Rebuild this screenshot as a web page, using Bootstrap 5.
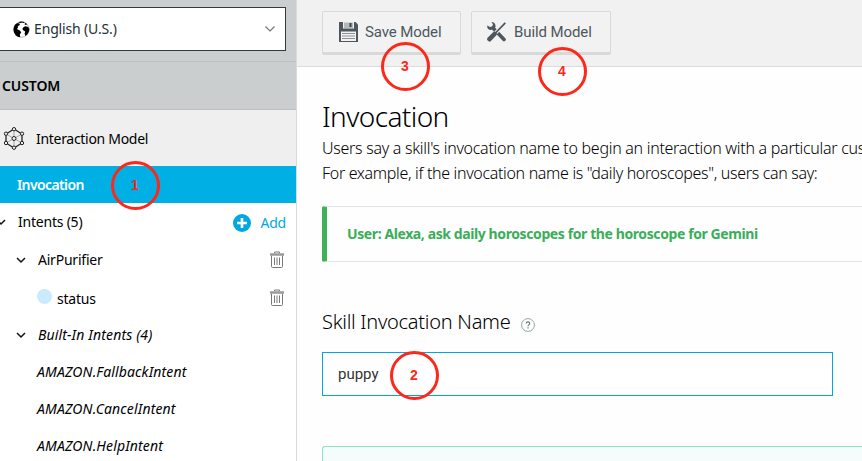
<!DOCTYPE html>
<html lang="en">
<head>
<meta charset="utf-8">
<meta name="viewport" content="width=device-width, initial-scale=1">
<title>Invocation</title>
<link href="https://cdn.jsdelivr.net/npm/bootstrap@5.3.0/dist/css/bootstrap.min.css" rel="stylesheet">
<style>
body { font-family: "Noto Sans", "Open Sans", sans-serif; font-size: 14px; line-height: 20px; color: #000; background: #fefefe; }
svg { flex: none; display: block; }
.shell { height: 461px; }
.side { width: 297px; border-right: 1px solid #d9dada; }
.side-head { background: #cacece; height: 110px; padding-top: 7px; }
.locale { width: 286px; height: 44px; border: 1px solid #333b3e; border-left: 0; background: #fff; color: #232f34; padding: 0 9px 0 13px; }
.section-name { margin-top: 10px; height: 49px; border-top: 1px solid #bcc1c1; border-bottom: 1px solid #bcc1c1; padding-left: 2px; font-weight: 600; }
.model-row { height: 56px; background: #efefef; padding: 1px 0 0 3px; gap: 11px; }
.active-row { height: 37px; background: #00b0e4; color: #fff; font-weight: 600; padding-left: 17px; }
.tree-row { height: 37px; padding-right: 11px; }
.tree-row.tall { height: 38px; }
.dot { width: 15px; height: 15px; background: #c9eaff; margin: -3px 5px 0 37px; }
.builtin { padding-left: 37px; font-style: italic; }
.add-link { color: #00a8e1; gap: 9px; margin-right: -1px; padding-top: 1px; }
.toolbar { height: 67px; background: #f1f1f1; border-bottom: 1px solid #dcdcdc; padding: 11px 0 0 25px; gap: 10px; }
.tool-btn { --bs-btn-border-radius: 2px; width: 139px; height: 44px; border: 1px solid #d9d9d9; border-bottom-width: 3px; background: #f2f2f2; color: #4d575d; font: 15px/20px Roboto, sans-serif; padding: 0 0 0 16px; gap: 7px; letter-spacing: -.1px; }
.tool-btn.wide { width: 140px; padding-left: 15px; gap: 8px; }
.pane { padding: 34px 0 0 25px; }
.page-title { font-size: 28px; line-height: 30px; font-weight: 300; margin: 0; letter-spacing: -.6px; }
.intro { font-size: 16px; line-height: 25px; font-weight: 300; margin: 5px 0 20px; }
.sample { height: 56px; border: 1px solid #e3e5e5; border-left: 5px solid #3fb159; border-right: 0; border-radius: 2px 0 0 2px; padding-left: 20px; color: #3aae58; font-weight: 700; letter-spacing: -.4px; }
.field-head { margin-top: 47px; gap: 11px; }
.field-head svg { margin-top: 5px; }
.field-title { font-size: 20px; line-height: 26px; font-weight: 300; margin: 0; letter-spacing: -.27px; }
.name-input, .name-input:focus { width: 511px; height: 44px; margin-top: 17px; border: 1px solid #00a8e1; border-radius: 0; padding: 0 15px; font: 15px/20px Roboto, sans-serif; color: #333; background: #fff; }
.hint { height: 60px; margin-top: 50px; border: 1px solid #8fe3c5; border-right: 0; border-radius: 3px 0 0 0; background: #f5fdfc; }
.step { position: absolute; width: 49px; height: 49px; border: 3px solid #fb281c; border-radius: 50%; color: #fb281c; font: bold 14px/43px "Liberation Sans", Arial, sans-serif; text-align: center; padding-right: 1px; }
.step-1 { left: 111px; top: 161px; }
.step-2 { left: 390px; top: 351px; }
.step-3 { left: 381px; top: 42px; }
.step-4 { left: 538px; top: 47px; }
.t-locale { letter-spacing: -.15px; }
.t-custom { letter-spacing: -.1px; }
.t-model { letter-spacing: -.3px; }
.t-active { letter-spacing: -.6px; }
.t-tree { letter-spacing: -.22px; }
.t-italic { letter-spacing: .14px; }
.t-slot { padding-top: 2px; }
.line-one { letter-spacing: -.28px; }
.line-two { letter-spacing: -.33px; }
</style>
</head>
<body class="overflow-hidden">
<div class="shell d-flex overflow-hidden position-relative">
  <aside class="side flex-shrink-0 bg-white overflow-hidden">
    <div class="side-head">
      <div class="locale d-flex align-items-center">
        <svg width="17" height="17" viewBox="0 0 17 17"><circle cx="8.5" cy="8.5" r="7.7" fill="#fff" stroke="#777" stroke-width=".5"/><path d="M2.200 3.500 4.500 2 7 2.800 6.500 4.200 4.800 5.200 5 6.800 3.900 8 6.800 9.500 8.200 11.300 6.800 13.500 7.200 16.200C3 15.800.6 12.500.5 8.500.6 6.500 1.200 4.800 2.200 3.500zM5 1.300C7.200.2 9.700.2 12 1.300L10.300 2 9.200 1.500 7.500 2zM12.200 1.700 14.200 3.200 12.700 4 11.600 3.200zM10.200 6.500 12 5.200 14.800 5.800 16.300 7.500C16.500 11 14.800 13.800 12.300 15L11.600 12.600 12.200 10.500 10.400 9.600 9.400 8z"/></svg>
        <span class="t-locale ms-1">English (U.S.)</span>
        <svg class="ms-auto" width="12" height="8" viewBox="0 0 12 8"><path d="M1.500 1.500 6 6l4.500-4.500" fill="none" stroke="#777" stroke-width="1.200"/></svg>
      </div>
      <div class="section-name d-flex align-items-center"><span class="t-custom">CUSTOM</span></div>
    </div>
    <div class="model-row d-flex align-items-center">
      <svg width="22" height="24" viewBox="0 0 22 24" fill="none" stroke="#222" stroke-width="1"><path d="M11 2 19 7V16L11 21 3 16V7z" stroke-width="1.300"/><path d="M11 2v19M3 7l16 9M19 7l-16 9" stroke="#888" stroke-width=".7"/><g fill="#efefef"><circle cx="11" cy="2.200" r="1.700"/><circle cx="19" cy="6.700" r="1.700"/><circle cx="19" cy="16" r="1.700"/><circle cx="11" cy="20.700" r="1.700"/><circle cx="3" cy="16" r="1.700"/><circle cx="3" cy="6.700" r="1.700"/><circle cx="11" cy="11.500" r="2"/></g></svg>
      <span class="t-model">Interaction Model</span>
    </div>
    <div class="active-row d-flex align-items-center"><span class="t-active">Invocation</span></div>
    <div class="tree-row tall d-flex align-items-center">
      <svg width="18" height="10" viewBox="0 0 18 10"><path d="M-3 3 1 7 5 3" fill="none" stroke="#111" stroke-width="1.500"/></svg>
      <span class="t-tree">Intents (5)</span>
      <span class="add-link d-flex align-items-center ms-auto">
        <svg width="18" height="18" viewBox="0 0 18 18"><circle cx="9" cy="9" r="9" fill="#00a8e1"/><path d="M9 4v10M4 9h10" stroke="#fff" stroke-width="2.600"/></svg>
        <span class="t-tree">Add</span>
      </span>
    </div>
    <div class="tree-row tall d-flex align-items-center">
      <svg width="38" height="10" viewBox="0 0 38 10"><path d="m17 3 4 4 4-4" fill="none" stroke="#111" stroke-width="1.500"/></svg>
      <span class="t-tree">AirPurifier</span>
      <svg class="ms-auto" width="16" height="18" viewBox="0 0 16 18" fill="none" stroke="#77797c"><path d="M2.500 4.500V15.500q0 1 1 1H12.500q1 0 1-1V4.500"/><path d="M1 3.500h14" stroke="#999" stroke-width="2.500"/><path d="M5.500 2V1h5v1M5.500 6.500v7.500M8 6.500v7.500M10.500 6.500v7.500"/></svg>
    </div>
    <div class="tree-row d-flex align-items-center">
      <span class="dot rounded-circle"></span>
      <span class="t-tree t-slot">status</span>
      <svg class="ms-auto" width="16" height="18" viewBox="0 0 16 18" fill="none" stroke="#77797c"><path d="M2.500 4.500V15.500q0 1 1 1H12.500q1 0 1-1V4.500"/><path d="M1 3.500h14" stroke="#999" stroke-width="2.500"/><path d="M5.500 2V1h5v1M5.500 6.500v7.500M8 6.500v7.500M10.500 6.500v7.500"/></svg>
    </div>
    <div class="tree-row d-flex align-items-center">
      <svg width="38" height="10" viewBox="0 0 38 10"><path d="m17 3 4 4 4-4" fill="none" stroke="#111" stroke-width="1.500"/></svg>
      <span class="t-italic fst-italic">Built-In Intents (4)</span>
    </div>
    <div class="tree-row builtin d-flex align-items-center"><span class="t-italic">AMAZON.FallbackIntent</span></div>
    <div class="tree-row builtin d-flex align-items-center"><span class="t-italic">AMAZON.CancelIntent</span></div>
    <div class="tree-row builtin d-flex align-items-center"><span class="t-italic">AMAZON.HelpIntent</span></div>
  </aside>

  <main class="flex-grow-1 overflow-hidden">
    <div class="toolbar d-flex">
      <button type="button" class="btn tool-btn d-flex align-items-center">
        <svg width="19" height="20" viewBox="0 0 19 20"><path d="M0 0H16.500L19 2.500V20H0z" fill="#4d575d"/><path d="M4 0h11v6.500H4z" fill="#f2f2f2"/><path d="M5 .5h9V6H5z" fill="#b4b9bb"/><path d="M10.500 1h2v4h-2z" fill="#38434a"/><path d="M2 9.500h15v9.500H2z" fill="#f2f2f2"/><path d="M3 11.500h13M3 14h13M3 16.500h13" stroke="#8b9296"/></svg>
        <span>Save Model</span>
      </button>
      <button type="button" class="btn tool-btn wide d-flex align-items-center">
        <svg width="19" height="20" viewBox="0 0 19 20"><path d="M6 6 17 17.500" stroke="#4d575d" stroke-width="3.600" stroke-linecap="round"/><path d="M4.500 0 6 2.500 5 4.500 3 5 .3 3.500C-.3 6.500 2 8.500 5 7.800L8.500 5C9 2 7 0 4.500 0z" fill="#4d575d"/><path d="M18 1 8.500 11" stroke="#f2f2f2" stroke-width="3.600"/><path d="M18.300.8 8 11.500" stroke="#4d575d" stroke-width="1.800"/><path d="m7.500 12-5 5.200" stroke="#4d575d" stroke-width="4.600" stroke-linecap="round"/></svg>
        <span>Build Model</span>
      </button>
    </div>
    <div class="pane">
      <h1 class="page-title">Invocation</h1>
      <p class="intro text-nowrap"><span class="line-one">Users say a skill's invocation name to begin an interaction with a particular cus</span><br><span class="line-two">For example, if the invocation name is "daily horoscopes", users can say:</span></p>
      <div class="sample d-flex align-items-center">User: Alexa, ask daily horoscopes for the horoscope for Gemini</div>
      <div class="field-head d-flex align-items-center">
        <h2 class="field-title">Skill Invocation Name</h2>
        <svg width="14" height="14" viewBox="0 0 14 14"><circle cx="7" cy="7" r="6.400" fill="none" stroke="#8d9a9e" stroke-width=".9"/><path d="M5.200 5.500C5.200 3.300 8.800 3.300 8.800 5.400 8.800 6.700 7 6.600 7 8.300M7 9.300v1.200" fill="none" stroke="#68777c" stroke-width="1.100"/></svg>
      </div>
      <input class="form-control shadow-none name-input" type="text" value="puppy" aria-label="Skill Invocation Name">
      <div class="hint"></div>
    </div>
  </main>

  <span class="step step-1">1</span>
  <span class="step step-2">2</span>
  <span class="step step-3">3</span>
  <span class="step step-4">4</span>
</div>
<script src="https://cdn.jsdelivr.net/npm/bootstrap@5.3.0/dist/js/bootstrap.bundle.min.js"></script>
</body>
</html>
